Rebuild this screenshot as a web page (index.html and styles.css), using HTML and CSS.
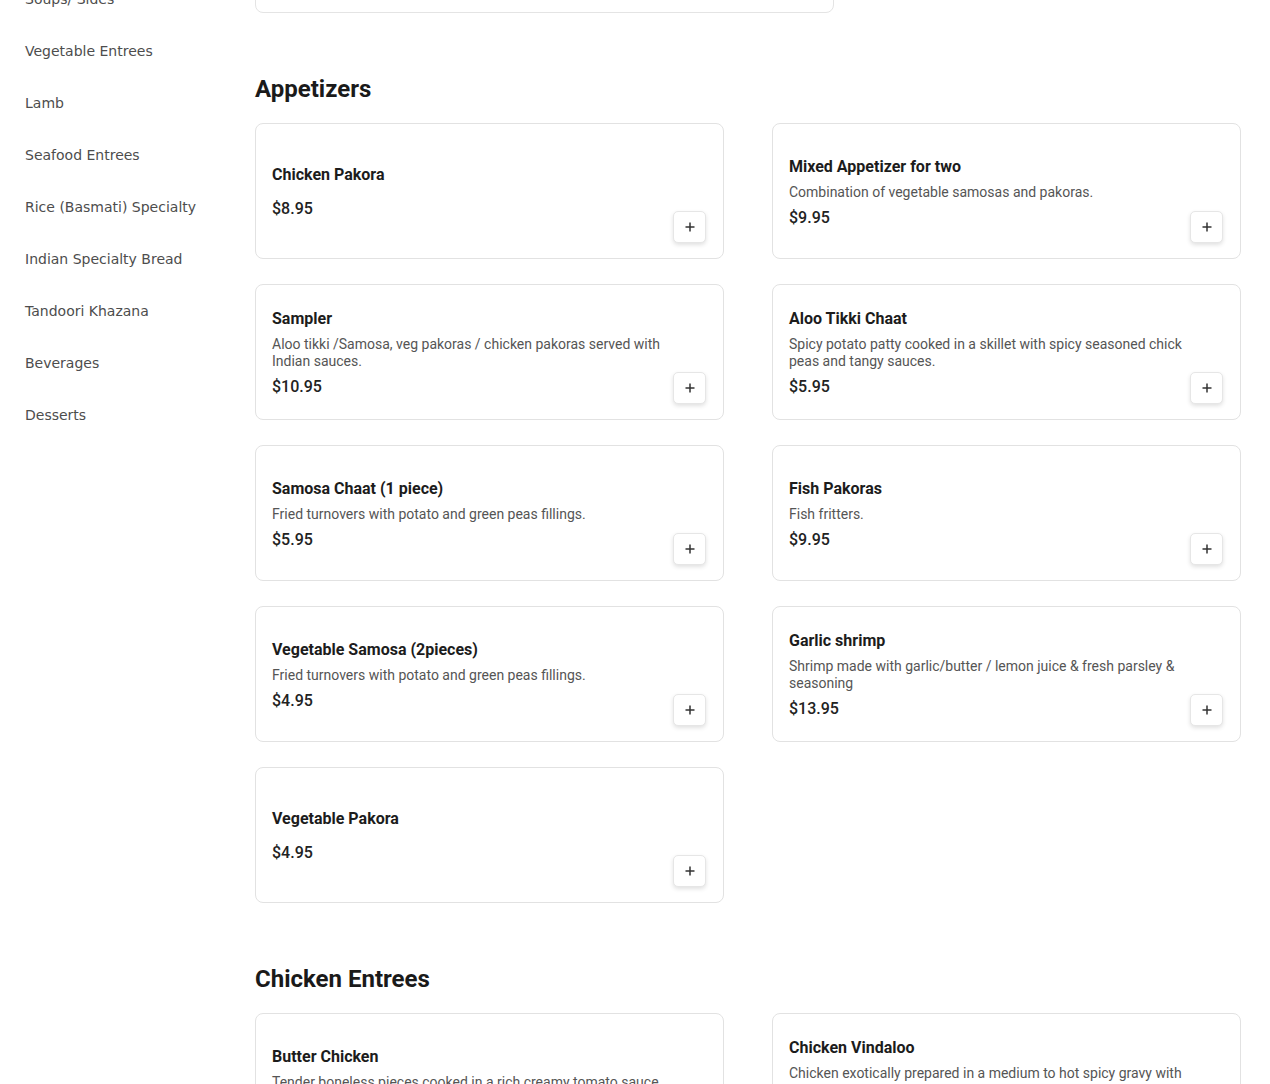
FILE: index.html
```html
<!DOCTYPE html>
<html lang="en">
<head>
<meta charset="utf-8">
<title>Menu</title>
<link rel="stylesheet" href="styles.css">
</head>
<body>
<div class="layout">
  <nav class="sidebar">
    <a class="nav-item">Soups/ Sides</a>
    <a class="nav-item">Vegetable Entrees</a>
    <a class="nav-item">Lamb</a>
    <a class="nav-item">Seafood Entrees</a>
    <a class="nav-item">Rice (Basmati) Specialty</a>
    <a class="nav-item">Indian Specialty Bread</a>
    <a class="nav-item">Tandoori Khazana</a>
    <a class="nav-item">Beverages</a>
    <a class="nav-item">Desserts</a>
  </nav>
  <main class="main">
    <div class="prev-card"></div>

    <section class="section">
      <h2 class="section-title">Appetizers</h2>
      <div class="grid">
        <div class="card">
          <div class="info">
            <div class="name">Chicken Pakora</div>
            <div class="price">$8.95</div>
          </div>
          <button class="add" type="button"><svg width="12" height="12" viewBox="0 0 12 12"><path d="M6 1.5v9M1.5 6h9" stroke="#333" stroke-width="1.5" fill="none"/></svg></button>
        </div>
        <div class="card">
          <div class="info">
            <div class="name">Mixed Appetizer for two</div>
            <div class="desc">Combination of vegetable samosas and pakoras.</div>
            <div class="price">$9.95</div>
          </div>
          <button class="add" type="button"><svg width="12" height="12" viewBox="0 0 12 12"><path d="M6 1.5v9M1.5 6h9" stroke="#333" stroke-width="1.5" fill="none"/></svg></button>
        </div>
        <div class="card">
          <div class="info">
            <div class="name">Sampler</div>
            <div class="desc">Aloo tikki /Samosa, veg pakoras / chicken pakoras served with Indian sauces.</div>
            <div class="price">$10.95</div>
          </div>
          <button class="add" type="button"><svg width="12" height="12" viewBox="0 0 12 12"><path d="M6 1.5v9M1.5 6h9" stroke="#333" stroke-width="1.5" fill="none"/></svg></button>
        </div>
        <div class="card">
          <div class="info">
            <div class="name">Aloo Tikki Chaat</div>
            <div class="desc">Spicy potato patty cooked in a skillet with spicy seasoned chick peas and tangy sauces.</div>
            <div class="price">$5.95</div>
          </div>
          <button class="add" type="button"><svg width="12" height="12" viewBox="0 0 12 12"><path d="M6 1.5v9M1.5 6h9" stroke="#333" stroke-width="1.5" fill="none"/></svg></button>
        </div>
        <div class="card">
          <div class="info">
            <div class="name">Samosa Chaat (1 piece)</div>
            <div class="desc">Fried turnovers with potato and green peas fillings.</div>
            <div class="price">$5.95</div>
          </div>
          <button class="add" type="button"><svg width="12" height="12" viewBox="0 0 12 12"><path d="M6 1.5v9M1.5 6h9" stroke="#333" stroke-width="1.5" fill="none"/></svg></button>
        </div>
        <div class="card">
          <div class="info">
            <div class="name">Fish Pakoras</div>
            <div class="desc">Fish fritters.</div>
            <div class="price">$9.95</div>
          </div>
          <button class="add" type="button"><svg width="12" height="12" viewBox="0 0 12 12"><path d="M6 1.5v9M1.5 6h9" stroke="#333" stroke-width="1.5" fill="none"/></svg></button>
        </div>
        <div class="card">
          <div class="info">
            <div class="name">Vegetable Samosa (2pieces)</div>
            <div class="desc">Fried turnovers with potato and green peas fillings.</div>
            <div class="price">$4.95</div>
          </div>
          <button class="add" type="button"><svg width="12" height="12" viewBox="0 0 12 12"><path d="M6 1.5v9M1.5 6h9" stroke="#333" stroke-width="1.5" fill="none"/></svg></button>
        </div>
        <div class="card">
          <div class="info">
            <div class="name">Garlic shrimp</div>
            <div class="desc">Shrimp made with garlic/butter / lemon juice &amp; fresh parsley &amp; seasoning</div>
            <div class="price">$13.95</div>
          </div>
          <button class="add" type="button"><svg width="12" height="12" viewBox="0 0 12 12"><path d="M6 1.5v9M1.5 6h9" stroke="#333" stroke-width="1.5" fill="none"/></svg></button>
        </div>
        <div class="card">
          <div class="info">
            <div class="name">Vegetable Pakora</div>
            <div class="price">$4.95</div>
          </div>
          <button class="add" type="button"><svg width="12" height="12" viewBox="0 0 12 12"><path d="M6 1.5v9M1.5 6h9" stroke="#333" stroke-width="1.5" fill="none"/></svg></button>
        </div>
      </div>
    </section>

    <section class="section">
      <h2 class="section-title">Chicken Entrees</h2>
      <div class="grid">
        <div class="card">
          <div class="info">
            <div class="name">Butter Chicken</div>
            <div class="desc">Tender boneless pieces cooked in a rich creamy tomato sauce.</div>
            <div class="price">$14.95</div>
          </div>
          <button class="add" type="button"><svg width="12" height="12" viewBox="0 0 12 12"><path d="M6 1.5v9M1.5 6h9" stroke="#333" stroke-width="1.5" fill="none"/></svg></button>
        </div>
        <div class="card">
          <div class="info">
            <div class="name">Chicken Vindaloo</div>
            <div class="desc">Chicken exotically prepared in a medium to hot spicy gravy with potatoes.</div>
            <div class="price">$14.95</div>
          </div>
          <button class="add" type="button"><svg width="12" height="12" viewBox="0 0 12 12"><path d="M6 1.5v9M1.5 6h9" stroke="#333" stroke-width="1.5" fill="none"/></svg></button>
        </div>
      </div>
    </section>
  </main>
</div>
</body>
</html>
```

FILE: styles.css
```css
* { box-sizing: border-box; }

html, body {
  margin: 0;
  padding: 0;
  background: #ffffff;
}

body {
  font-family: Roboto, "Liberation Sans", sans-serif;
  color: #1a1a1a;
  overflow: hidden;
}

.layout {
  display: flex;
  align-items: flex-start;
}

.sidebar {
  width: 255px;
  flex: none;
  padding-left: 25px;
  margin-top: -27px;
  display: flex;
  flex-direction: column;
}

.nav-item {
  display: block;
  font-family: "DejaVu Sans", sans-serif;
  font-size: 14px;
  line-height: 20px;
  padding: 16px 0;
  color: #4d4d4d;
  text-decoration: none;
}

.main {
  width: 986px;
  flex: none;
  margin-top: -67px;
}

.prev-card {
  width: 579px;
  height: 80px;
  border: 1px solid #e4e4e4;
  border-radius: 8px;
}

.section {
  padding-top: 60px;
}

.section-title {
  margin: 0 0 18px;
  font-size: 24px;
  line-height: 32px;
  font-weight: 700;
  color: #1a1a1a;
}

.grid {
  display: grid;
  grid-template-columns: 469px 469px;
  column-gap: 48px;
  row-gap: 25px;
}

.card {
  height: 136px;
  border: 1px solid #e2e2e2;
  border-radius: 8px;
  padding: 17px 17px 15px 16px;
  display: flex;
  align-items: stretch;
  gap: 4px;
  background: #fff;
}

.info {
  flex: 1;
  min-width: 0;
  display: flex;
  flex-direction: column;
  justify-content: center;
}

.name {
  font-size: 16px;
  line-height: 24px;
  font-weight: 700;
  color: #1c1c1c;
  margin-bottom: 5px;
}

.desc {
  font-size: 14px;
  line-height: 17px;
  color: #555555;
}

.price {
  font-size: 16px;
  line-height: 24px;
  font-weight: 500;
  color: #222222;
  margin-top: 5px;
}

.add {
  flex: none;
  align-self: flex-end;
  width: 33px;
  height: 32px;
  padding: 0;
  border: 1px solid #e6e6e6;
  border-radius: 5px;
  background: #fff;
  box-shadow: 0 2px 4px rgba(0, 0, 0, 0.12);
  display: flex;
  align-items: center;
  justify-content: center;
  cursor: pointer;
}

.add svg { display: block; }
```
